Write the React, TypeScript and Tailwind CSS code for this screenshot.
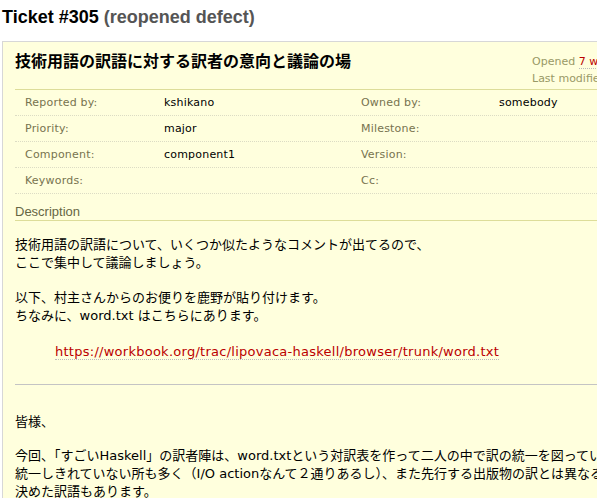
import React from "react";

const body = "font-['DejaVu_Sans','Noto_Sans_CJK_JP',sans-serif]";
const head = "font-['Liberation_Sans','Noto_Sans_CJK_JP',sans-serif]";

const rows = [
  ["Reported by:", "kshikano", "Owned by:", "somebody"],
  ["Priority:", "major", "Milestone:", ""],
  ["Component:", "component1", "Version:", ""],
  ["Keywords:", "", "Cc:", ""],
];

const App: React.FC = () => {
  return (
    <div className={`w-[597px] h-[498px] overflow-hidden bg-white text-black ${body}`}>
      {/* Title */}
      <h1 className={`pl-[2px] pt-[6px] h-[41px] text-[18px] leading-[22px] font-bold whitespace-nowrap ${head}`}>
        Ticket #305 <span className="text-[#555]">(reopened defect)</span>
      </h1>

      {/* Ticket box */}
      <div className="ml-[2px] w-[760px] border border-[#d7d7d7] bg-[#ffffdd] pl-[12px] pr-[12px]">
        <div className="flex h-[48px] border-b border-[#dddd99]">
          <h2 className="w-[517px] shrink-0 pt-[8px] text-[16px] leading-[20px] font-bold font-['Noto_Sans_CJK_JP',sans-serif]">
            技術用語の訳語に対する訳者の意向と議論の場
          </h2>
          <div className="pt-[11px] text-[11px] leading-[17px] text-[#999966] whitespace-nowrap">
            <div>
              Opened{" "}
              <span className="text-[#bb0000] border-b border-dotted border-[#bbbbbb]">7 weeks ago</span>
            </div>
            <div>
              Last modified{" "}
              <span className="text-[#bb0000] border-b border-dotted border-[#bbbbbb]">7 weeks ago</span>
            </div>
          </div>
        </div>

        {/* Properties */}
        <div className="text-[11px]">
          {rows.map((r) => (
            <div
              key={r[0]}
              className="grid grid-cols-[149px_197px_138px_1fr] h-[26px] pt-[1px] items-center border-b border-dotted border-[#dcdcc4]"
            >
              <div className="pl-[10px] text-[#77734f] tracking-[0.2px]">{r[0]}</div>
              <div className="tracking-[0.2px]">{r[1]}</div>
              <div className="text-[#77734f] tracking-[0.2px]">{r[2]}</div>
              <div className="tracking-[0.2px]">{r[3]}</div>
            </div>
          ))}
        </div>

        {/* Description */}
        <h3 className={`mt-[10px] text-[13px] leading-[16px] text-[#666644] border-b border-[#dddd99] ${head}`}>
          Description
        </h3>
        <div className="text-[13px] leading-[18px] whitespace-nowrap pb-[20px]">
          <p className="mt-[15px]">
            技術用語の訳語について、いくつか似たようなコメントが出てるので、
            <br />
            ここで集中して議論しましょう。
          </p>
          <p className="mt-[17px]">
            以下、村主さんからのお便りを鹿野が貼り付けます。
            <br />
            ちなみに、word.txt はこちらにあります。
          </p>
          <p className="mt-[18px] ml-[40px]">
            <a className="text-[#bb0000] tracking-[0.26px] border-b border-dotted border-[#bbbbbb]">
              https://workbook.org/trac/lipovaca-haskell/browser/trunk/word.txt
            </a>
          </p>
          <hr className="mt-[23px] border-0 border-t border-[#c4c4c4]" />
          <p className="mt-[28px]">皆様、</p>
          <p className="mt-[16px]">
            今回、「すごいHaskell」の訳者陣は、word.txtという対訳表を作って二人の中で訳の統一を図っていますが、
            <br />
            統一しきれていない所も多く（I/O actionなんて２通りあるし）、また先行する出版物の訳とは異なる
            <br />
            決めた訳語もあります。
          </p>
        </div>
      </div>
    </div>
  );
};

export default App;
